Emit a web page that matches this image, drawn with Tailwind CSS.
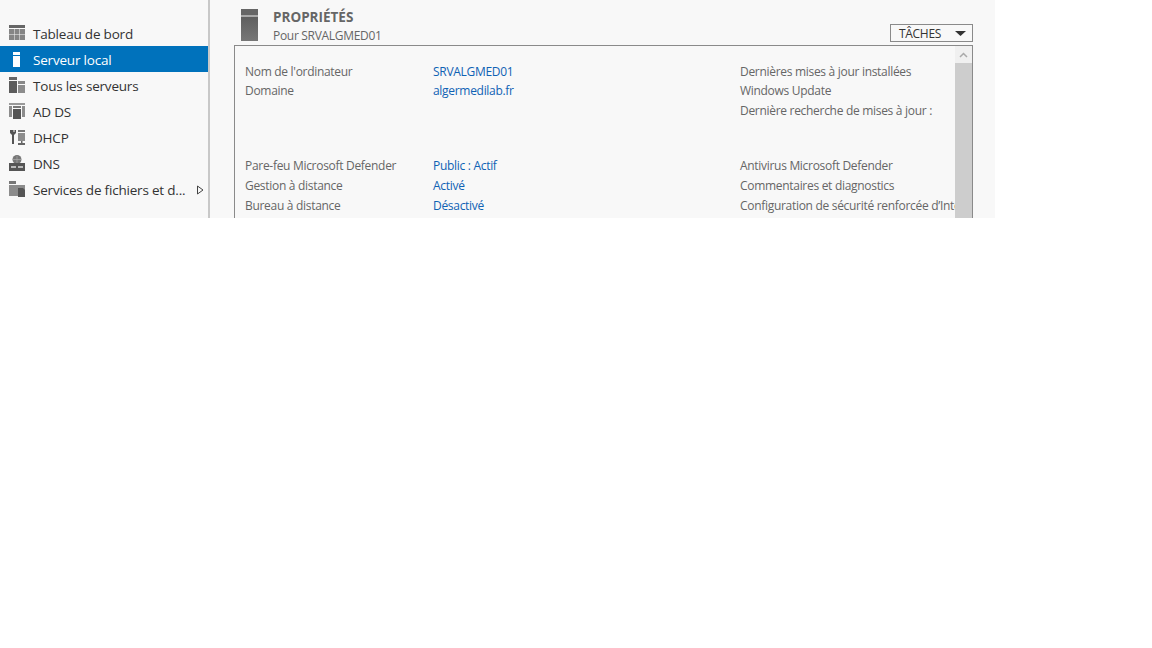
<!doctype html>
<html><head><meta charset="utf-8"><script src="https://cdn.jsdelivr.net/npm/@tailwindcss/browser@4"></script></head>
<body class="bg-white font-['Open_Sans','Noto_Sans',sans-serif]">
<div class="w-[995px] h-[218px] flex bg-[#f8f8f8] overflow-hidden">
  <aside class="w-[210px] shrink-0 border-r-2 border-[#c8c8c8] pt-[20px] text-[13.5px] tracking-[-0.2px] text-[#333]">
    <div class="h-[26px] flex items-center pl-[9px] gap-2">
      <svg class="shrink-0" width="16" height="16" viewBox="0 0 16 16" fill="#858585"><rect y="0" width="16" height="3" fill="#666"/><rect y="4" width="5" height="5"/><rect x="5.500" y="4" width="5" height="5"/><rect x="11" y="4" width="5" height="5"/><rect y="9.500" width="5" height="5.500"/><rect x="5.500" y="9.500" width="5" height="5.500"/><rect x="11" y="9.500" width="5" height="5.500"/></svg>
      <span class="mt-[2px]">Tableau de bord</span></div>
    <div class="h-[26px] w-[208px] flex items-center pl-[9px] gap-2 bg-[#0072bc] text-white">
      <svg class="shrink-0" width="16" height="16" viewBox="0 0 16 16" fill="#fff"><rect x="4" y="1" width="7" height="3"/><rect x="4" y="5" width="7" height="11"/></svg>
      <span class="mt-[2px]">Serveur local</span></div>
    <div class="h-[26px] flex items-center pl-[9px] gap-2">
      <svg class="shrink-0" width="16" height="16" viewBox="0 0 16 16"><rect y="0" width="8" height="3" fill="#666"/><rect y="4" width="8" height="12" fill="#5c5c5c"/><rect x="9" y="4" width="7" height="3" fill="#888"/><rect x="9" y="8" width="7" height="8" fill="#8c8c8c"/></svg>
      <span class="mt-[2px]">Tous les serveurs</span></div>
    <div class="h-[26px] flex items-center pl-[9px] gap-2">
      <svg class="shrink-0" width="16" height="16" viewBox="0 0 16 16"><rect x="0" y="0" width="16" height="2" fill="#999"/><rect x="0" y="3" width="3" height="11" fill="#8c8c8c"/><rect x="13" y="3" width="3" height="11" fill="#8c8c8c"/><rect x="4" y="3" width="8" height="2" fill="#777"/><rect x="4" y="6" width="8" height="10" fill="#555"/></svg>
      <span class="mt-[2px]">AD DS</span></div>
    <div class="h-[26px] flex items-center pl-[9px] gap-2">
      <svg class="shrink-0" width="16" height="16" viewBox="0 0 16 16"><path d="M1 1v3l2 2v9h2V6l2-2V1H5.500v2h-1V1z" fill="#555"/><rect x="9" y="1" width="7" height="2" fill="#777"/><rect x="9" y="4" width="7" height="8" fill="#8c8c8c"/><rect x="12" y="12" width="1.500" height="2" fill="#666"/><rect x="9" y="14" width="7" height="2" fill="#666"/></svg>
      <span class="mt-[2px]">DHCP</span></div>
    <div class="h-[26px] flex items-center pl-[9px] gap-2">
      <svg class="shrink-0" width="16" height="16" viewBox="0 0 16 16"><circle cx="8" cy="4.500" r="4.500" fill="#777"/><path d="M8 1v7M4 4.500h8" stroke="#aaa" stroke-width=".7"/><rect x="0" y="8" width="16" height="8" fill="#555"/><rect x="2" y="11" width="5" height="2" fill="#bbb"/><rect x="9" y="11" width="5" height="2" fill="#bbb"/></svg>
      <span class="mt-[2px]">DNS</span></div>
    <div class="h-[26px] flex items-center pl-[9px] gap-2 relative">
      <svg class="shrink-0" width="16" height="16" viewBox="0 0 16 16"><rect y="0" width="7" height="3" fill="#777"/><rect y="4" width="16" height="11" fill="#8c8c8c"/><path d="M9 7h5l2 2v7H9z" fill="#555"/></svg>
      <span class="mt-[2px]">Services de fichiers et d...</span>
      <svg class="absolute left-[197px] top-[9px]" width="7" height="10" viewBox="0 0 7 10"><path d="M.5 1 6 5 .5 9z" fill="none" stroke="#444"/></svg></div>
  </aside>
  <main class="flex-1 min-w-0 pl-[24px] pr-[22px] text-[12px] tracking-[-0.3px] text-[#666]">
    <header class="h-[45px] flex">
      <svg class="ml-[7px] mt-[9px] shrink-0" width="17" height="32" viewBox="0 0 17 32"><defs><linearGradient id="g" x1="0" y1="0" x2="0" y2="1"><stop offset="0" stop-color="#5f5f5f"/><stop offset="1" stop-color="#777"/></linearGradient></defs><rect width="17" height="6" fill="#666"/><rect y="6" width="17" height="2" fill="#aaa"/><rect y="8" width="17" height="24" fill="url(#g)"/></svg>
      <div class="ml-[15px] pt-[8px] flex-1">
        <div class="text-[13.5px] tracking-[0px] font-bold leading-[18px] text-[#666]">PROPRIÉTÉS</div>
        <div class="leading-[17px] mt-[1px]">Pour SRVALGMED01</div>
      </div>
      <div class="self-end mb-[3px] w-[83px] h-[18px] border border-[#8a8a8a] flex items-center justify-between pl-[8px] pr-[6px] text-[#333]">
        <span class="mt-[2px]">TÂCHES</span><svg width="11" height="5" viewBox="0 0 11 5"><path d="M0 0h11L5.500 5z" fill="#333"/></svg>
      </div>
    </header>
    <section class="h-[173px] border-l border-t border-r border-[#8a8a8a] relative overflow-hidden grid grid-cols-[188px_307px_1fr] pl-[10px] pt-[16px] content-start pr-[17px] leading-[19px]">
      <span>Nom de l'ordinateur</span><span class="text-[#0f62b4]">SRVALGMED01</span><span>Dernières mises à jour installées</span>
      <span>Domaine</span><span class="text-[#0f62b4]">algermedilab.fr</span><span>Windows Update</span>
      <span></span><span></span><span class="mt-[1px]">Dernière recherche de mises à jour :</span>
      <span class="col-span-3 h-[36px]"></span>
      <span>Pare-feu Microsoft Defender</span><span class="text-[#0f62b4]">Public : Actif</span><span>Antivirus Microsoft Defender</span>
      <span class="mt-[1px]">Gestion à distance</span><span class="text-[#0f62b4] mt-[1px]">Activé</span><span class="mt-[1px]">Commentaires et diagnostics</span>
      <span class="mt-[1px]">Bureau à distance</span><span class="text-[#0f62b4] mt-[1px]">Désactivé</span><span class="mt-[1px] whitespace-nowrap overflow-hidden">Configuration de sécurité renforcée d’Internet Explorer</span>
      <div class="absolute right-0 top-0 bottom-0 w-[17px] bg-[#f0f0f0] flex flex-col">
        <div class="h-[17px] flex items-center justify-center"><svg width="9" height="6" viewBox="0 0 9 6"><path d="M1 5 4.500 1.500 8 5" fill="none" stroke="#aaa" stroke-width="1.500"/></svg></div>
        <div class="flex-1 bg-[#cdcdcd]"></div>
      </div>
    </section>
  </main>
</div>
</body></html>
